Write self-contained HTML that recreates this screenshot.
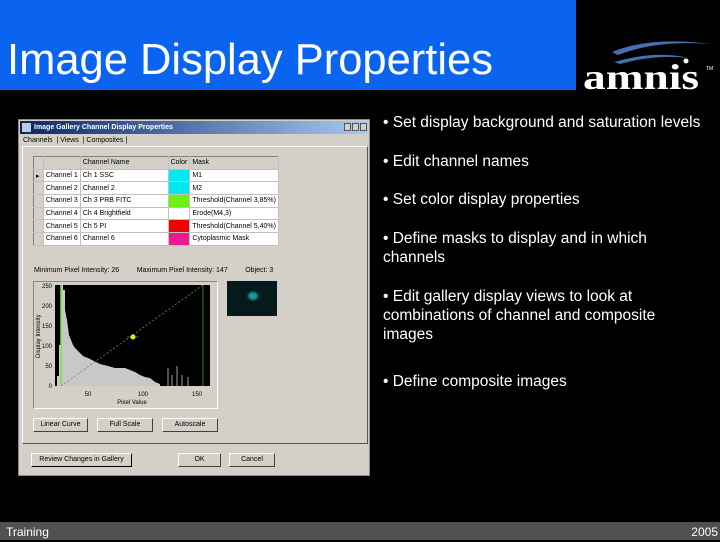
<!DOCTYPE html>
<html><head><meta charset="utf-8"><style>
*{margin:0;padding:0;box-sizing:border-box}
body{width:720px;height:540px;background:#000;position:relative;overflow:hidden;font-family:"Liberation Sans",sans-serif}
.a{position:absolute}
.bul{position:absolute;left:383px;color:#fff;font-size:15.5px;line-height:19px;width:320px}
.dlg{font-size:7px;color:#000}
.btn{position:absolute;background:#d4d0c8;border:1px solid;border-color:#fff #404040 #404040 #fff;font-size:7px;text-align:center;line-height:12px}
td{border-right:1px solid #c0c0c0;border-bottom:1px solid #c0c0c0;padding:0 2px;height:12.7px;font-size:7px;white-space:nowrap}
</style></head><body>
<div class="a" style="left:0;top:0;width:576px;height:90px;background:#0a64f0"></div>
<div class="a" style="left:7px;top:40px;color:#fff;font-size:43.5px;line-height:40px;white-space:nowrap">Image Display Properties</div>
<svg class="a" style="left:576px;top:30px" width="144" height="65" viewBox="0 0 144 65">
<path d="M36 22 Q75 6 134 14 Q80 10 42 25Z" fill="#4a6fb0"/>
<path d="M38 32 Q80 20 112 28 Q80 24 44 34Z" fill="#4a6fb0"/>
<circle cx="110" cy="31" r="2.5" fill="#fff"/>
<text x="7" y="59" font-family="Liberation Serif,serif" font-weight="bold" font-size="36" fill="#fff" textLength="116" lengthAdjust="spacingAndGlyphs">amnis</text>
<text x="130" y="40" font-size="5" fill="#fff" font-family="Liberation Sans">TM</text>
</svg>
<div class="bul" style="top:113px">• Set display background and saturation levels</div>
<div class="bul" style="top:152px">• Edit channel names</div>
<div class="bul" style="top:190px">• Set color display properties</div>
<div class="bul" style="top:229px">• Define masks to display and in which channels</div>
<div class="bul" style="top:287px">• Edit gallery display views to look at combinations of channel and composite images</div>
<div class="bul" style="top:372px">• Define composite images</div>

<div class="a dlg" style="left:18px;top:119px;width:352px;height:357px;background:#d4d0c8;border:1px solid #888">
 <div class="a" style="left:1px;top:1px;width:348px;height:13px;background:linear-gradient(90deg,#0a246a,#a6caf0);color:#fff;font-weight:bold;font-size:7px;line-height:13px;padding-left:14px">Image Gallery Channel Display Properties</div>
 <div class="a" style="left:3px;top:3px;width:9px;height:9px;background:#bcd"></div>
 <div class="a" style="left:325px;top:3px;width:7px;height:8px;background:#d4d0c8;border:1px solid #555"></div>
 <div class="a" style="left:333px;top:3px;width:7px;height:8px;background:#d4d0c8;border:1px solid #555"></div>
 <div class="a" style="left:341px;top:3px;width:7px;height:8px;background:#d4d0c8;border:1px solid #555"></div>
 <div class="a" style="left:4px;top:16px;font-size:7px;line-height:10px;white-space:nowrap">Channels &nbsp;| Views &nbsp;| Composites |</div>
 <div class="a" style="left:3px;top:26px;width:346px;height:298px;border:1px solid;border-color:#fff #555 #555 #fff"></div>
 <table class="a" style="left:14px;top:36px;width:246px;border-collapse:collapse;background:#fff;border:1px solid #808080">
  <tr style="background:#d4d0c8"><td style="width:10px"></td><td style="width:34px"></td><td style="width:90px">Channel Name</td><td style="width:19px">Color</td><td>Mask</td></tr>
  <tr><td style="background:#d4d0c8">▸</td><td>Channel 1</td><td>Ch 1 SSC</td><td style="background:#00e8f0"></td><td>M1</td></tr>
  <tr><td style="background:#d4d0c8"></td><td>Channel 2</td><td>Channel 2</td><td style="background:#00e8f0"></td><td>M2</td></tr>
  <tr><td style="background:#d4d0c8"></td><td>Channel 3</td><td>Ch 3 PRB FITC</td><td style="background:#70f010"></td><td>Threshold(Channel 3,85%)</td></tr>
  <tr><td style="background:#d4d0c8"></td><td>Channel 4</td><td>Ch 4 Brightfield</td><td style="background:#fff"></td><td>Erode(M4,3)</td></tr>
  <tr><td style="background:#d4d0c8"></td><td>Channel 5</td><td>Ch 5 PI</td><td style="background:#f00000"></td><td>Threshold(Channel 5,40%)</td></tr>
  <tr><td style="background:#d4d0c8"></td><td>Channel 6</td><td>Channel 6</td><td style="background:#f01890"></td><td>Cytoplasmic Mask</td></tr>
 </table>
 <div class="a" style="left:15px;top:147px;font-size:7px;white-space:nowrap">Minimum Pixel Intensity: 26 &nbsp; &nbsp; &nbsp; &nbsp; Maximum Pixel Intensity: 147 &nbsp; &nbsp; &nbsp; &nbsp; Object: 3</div>
 <div class="a" style="left:14px;top:161px;width:185px;height:128px;border:1px solid;border-color:#888 #fff #fff #888"></div>
 <div class="a" style="left:208px;top:161px;width:50px;height:35px;background:#061a1e"></div>
 <div class="a" style="left:229px;top:172px;width:10px;height:8px;background:#1a9aa0;border-radius:50%;filter:blur(1px)"></div>
 <div class="btn" style="left:14px;top:298px;width:55px;height:14px">Linear Curve</div>
 <div class="btn" style="left:78px;top:298px;width:56px;height:14px">Full Scale</div>
 <div class="btn" style="left:143px;top:298px;width:56px;height:14px">Autoscale</div>
 <div class="btn" style="left:12px;top:333px;width:101px;height:14px;border-color:#fff #000 #000 #fff">Review Changes in Gallery</div>
 <div class="btn" style="left:159px;top:333px;width:43px;height:14px">OK</div>
 <div class="btn" style="left:210px;top:333px;width:46px;height:14px">Cancel</div>
</div>
<svg class="a" style="left:30px;top:278px" width="190" height="130" viewBox="30 278 190 130" font-family="Liberation Sans" font-size="6">
<rect x="55" y="285" width="155" height="101" fill="#000"/>
<polygon fill="#c8c8c8" points="57,386 57,376 59,376 59,345 61,345 61,285 63,285 63,290 65,290 65,310 67,320 69,335 71,340 73,345 75,348 77,350 79,352 81,354 83,356 85,357 88,358 92,360 96,362 100,364 108,366 115,368 125,368 130,370 135,372 140,375 145,377 150,378 155,382 160,384 160,386"/>
<g stroke="#c8c8c8" stroke-width="0.8"><line x1="168" y1="386" x2="168" y2="368"/><line x1="172" y1="386" x2="172" y2="375"/><line x1="177" y1="386" x2="177" y2="366"/><line x1="182" y1="386" x2="182" y2="375"/><line x1="188" y1="386" x2="188" y2="377"/></g>
<line x1="61" y1="285" x2="61" y2="386" stroke="#7ee04a" stroke-width="1.5"/>
<line x1="203" y1="285" x2="203" y2="386" stroke="#3a7a2a" stroke-width="1"/>
<line x1="61" y1="386" x2="203" y2="285" stroke="#5a9a3a" stroke-width="0.8" stroke-dasharray="2,2"/>
<circle cx="133" cy="337" r="2.5" fill="#f0f020"/>
<line x1="127" y1="337" x2="139" y2="337" stroke="#aa8" stroke-width="0.5"/>
<g fill="#000" text-anchor="end"><text x="52" y="288">250</text><text x="52" y="308">200</text><text x="52" y="328">150</text><text x="52" y="348">100</text><text x="52" y="368">50</text><text x="52" y="388">0</text></g>
<g fill="#000" text-anchor="middle"><text x="88" y="396">50</text><text x="143" y="396">100</text><text x="197" y="396">150</text><text x="132" y="404">Pixel Value</text></g>
<text x="0" y="0" fill="#000" transform="translate(40,358) rotate(-90)">Display Intensity</text>
</svg>

<div class="a" style="left:0;top:522px;width:720px;height:18px;background:#505050;color:#fff;font-size:12px;line-height:20px">
 <span class="a" style="left:6px">Training</span><span class="a" style="right:2px">2005</span>
</div>
</body></html>
